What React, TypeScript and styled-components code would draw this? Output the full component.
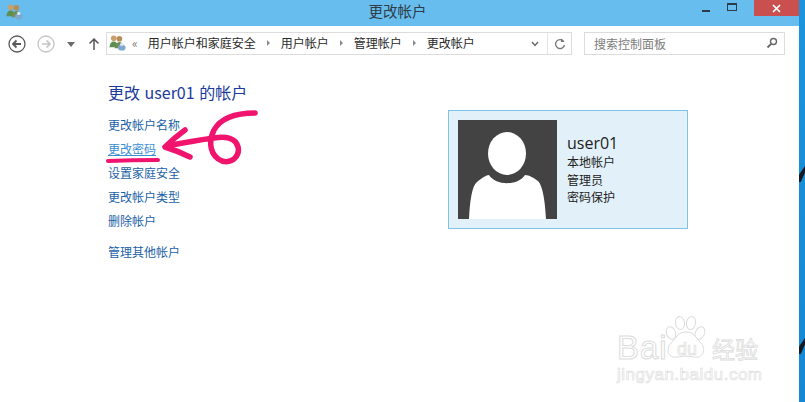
import React from 'react';
import styled, { createGlobalStyle } from 'styled-components';

const GlobalStyle = createGlobalStyle`
  html, body {
    margin: 0;
    padding: 0;
    background: #fff;
    overflow: hidden;
  }
  body {
    font-family: "Noto Sans CJK SC", "Open Sans", sans-serif;
  }
`;

const Desktop = styled.div`
  position: relative;
  width: 805px;
  height: 402px;
  display: flex;
  background: #fff;
  overflow: hidden;
`;

const Window = styled.div`
  width: 799px;
  height: 402px;
  display: flex;
  flex-direction: column;
  flex-shrink: 0;
`;

const Wallpaper = styled.div`
  position: relative;
  flex: 1;
  background: linear-gradient(180deg, #1b93dd 0%, #1488d4 100%);
`;

const WallpaperMark = styled.span<{ $top: number }>`
  position: absolute;
  left: 0;
  top: ${(p) => p.$top}px;
  width: 6px;
  height: 16px;
  background: #141a20;
  clip-path: polygon(100% 0, 100% 40%, 30% 100%, 0 100%, 0 55%);
`;

/* TITLE BAR */
const TitleBar = styled.div`
  height: 26px;
  flex-shrink: 0;
  background: #66bdee;
  display: grid;
  grid-template-columns: 1fr auto 1fr;
  align-items: center;
`;

const TitleIcon = styled.div`
  display: flex;
  padding: 0 0 4px 6px;
`;

const TitleText = styled.div`
  font-size: 14.5px;
  color: #2f3b45;
  padding: 0 4px 6px 0;
`;

const WindowButtons = styled.div`
  display: flex;
  justify-content: flex-end;
  align-self: start;
`;

const WindowButton = styled.div<{ $close?: boolean }>`
  width: ${(p) => (p.$close ? '45px' : '26px')};
  height: 16px;
  margin-left: ${(p) => (p.$close ? '9px' : '0')};
  background: ${(p) => (p.$close ? '#c9504f' : 'transparent')};
  display: flex;
  align-items: center;
  justify-content: center;
`;

/* ADDRESS ROW */
const NavRow = styled.div`
  height: 36px;
  flex-shrink: 0;
  display: flex;
  align-items: flex-start;
  padding-top: 6px;
  box-sizing: border-box;
`;

const NavButtons = styled.div`
  width: 106px;
  height: 24px;
  flex-shrink: 0;
  display: flex;
  align-items: center;
  padding-left: 8px;
  box-sizing: border-box;
`;

const NavGlyph = styled.svg<{ $gap: number }>`
  margin-left: ${(p) => p.$gap}px;
  flex-shrink: 0;
`;

const AddressBar = styled.div`
  width: 466px;
  height: 23px;
  flex-shrink: 0;
  border: 1px solid #dcdcdc;
  box-sizing: border-box;
  display: flex;
  align-items: center;
  font-size: 12px;
  color: #2a2a2a;
`;

const Crumbs = styled.div`
  flex: 1;
  display: flex;
  align-items: center;
  padding: 0 0 2px 2px;
  white-space: nowrap;
`;

const Chevrons = styled.span`
  font-size: 12px;
  color: #777;
  margin: 0 10px 0 6px;
`;

const Caret = styled.span`
  width: 0;
  height: 0;
  margin: 0 11px;
  border-left: 3px solid #8a8a8a;
  border-top: 3px solid transparent;
  border-bottom: 3px solid transparent;
`;

const BarAction = styled.div<{ $divider?: boolean }>`
  width: 24px;
  height: 21px;
  display: flex;
  align-items: center;
  justify-content: center;
  border-left: ${(p) => (p.$divider ? '1px solid #e4e4e4' : 'none')};
  box-sizing: border-box;
`;

const SearchBox = styled.div`
  width: 201px;
  height: 23px;
  margin-left: 12px;
  border: 1px solid #dcdcdc;
  box-sizing: border-box;
  display: flex;
  align-items: center;
  justify-content: space-between;
  padding: 0 6px 1px 9px;
  font-size: 12px;
  color: #7d7d7d;
`;

/* CONTENT */
const Content = styled.div`
  flex: 1;
  display: flex;
  padding-top: 19px;
`;

const LeftColumn = styled.div`
  width: 448px;
  padding-left: 108px;
  box-sizing: border-box;
  flex-shrink: 0;
`;

const Heading = styled.h2`
  margin: 0 0 10px;
  font-size: 16px;
  font-weight: 400;
  line-height: 22px;
  color: #1a3a9c;
  word-spacing: 1px;
`;

const LinkList = styled.div`
  display: flex;
  flex-direction: column;
`;

const ActionLink = styled.a<{ $active?: boolean; $spaced?: boolean }>`
  height: 24px;
  margin-top: ${(p) => (p.$spaced ? '7px' : '0')};
  font-size: 12px;
  line-height: 24px;
  color: ${(p) => (p.$active ? '#3b8fd6' : '#1c5fa8')};
  text-decoration: ${(p) => (p.$active ? 'underline' : 'none')};
`;

const AccountCard = styled.div`
  width: 240px;
  height: 119px;
  margin-top: 29px;
  padding: 9px;
  box-sizing: border-box;
  background: #e2f1f9;
  border: 1px solid #7fc3e3;
  display: flex;
  align-items: center;
  gap: 10px;
`;

const Avatar = styled.div`
  width: 99px;
  height: 99px;
  flex-shrink: 0;
  background: #434343;
`;

const AccountInfo = styled.div`
  display: flex;
  flex-direction: column;
  color: #222;
`;

const AccountName = styled.div`
  font-family: "Open Sans", "Noto Sans", sans-serif;
  font-size: 16px;
  line-height: 20px;
`;

const AccountLine = styled.div`
  font-size: 12px;
  line-height: 17.5px;
`;

/* OVERLAYS */
const Scribble = styled.svg`
  position: absolute;
  left: 0;
  top: 0;
  pointer-events: none;
`;

const Watermark = styled.div`
  position: absolute;
  left: 617px;
  top: 316px;
  width: 150px;
  height: 70px;
  color: #fff;
  font-family: "Liberation Sans", sans-serif;
`;

const MarkBrand = styled.span`
  position: absolute;
  left: 0;
  top: 14px;
  font-size: 33px;
  line-height: 36px;
  letter-spacing: 1px;
  -webkit-text-stroke: 1px #dcdcdc;
`;

const MarkPaw = styled.svg`
  position: absolute;
  left: 47px;
  top: 0;
`;

const MarkDu = styled.span`
  position: absolute;
  left: 60px;
  top: 24px;
  font-size: 18px;
  line-height: 18px;
  -webkit-text-stroke: 0.7px #dcdcdc;
`;

const MarkCn = styled.span`
  position: absolute;
  left: 95px;
  top: 19px;
  font-family: "Noto Sans CJK SC", sans-serif;
  font-size: 23px;
  line-height: 26px;
  white-space: nowrap;
  -webkit-text-stroke: 0.8px #dcdcdc;
`;

const MarkUrl = styled.span`
  position: absolute;
  left: 0;
  top: 49px;
  font-size: 17px;
  line-height: 20px;
  letter-spacing: 0.5px;
  white-space: nowrap;
  -webkit-text-stroke: 0.7px #e0e0e0;
`;

const UsersIcon: React.FC<{ size: number }> = ({ size }) => (
  <svg width={size} height={size} viewBox="0 0 18 18">
    <circle cx="5" cy="4.5" r="3" fill="#c9a06a" />
    <path d="M0.5 14 Q1 8 5 8 Q9 8 9.5 14 Z" fill="#5d8f4e" />
    <circle cx="11" cy="5" r="3" fill="#b98d58" />
    <path d="M6 15 Q7 8.5 11 8.5 Q14 8.5 15 12 L15 15 Z" fill="#6f8f5a" />
    <ellipse cx="13.5" cy="14.5" rx="4" ry="3" fill="#7fa8cf" />
    <circle cx="13.5" cy="11" r="1.8" fill="#dfe8ef" />
  </svg>
);

const BackIcon: React.FC<{ size: number }> = ({ size }) => (
  <svg width={size} height={size} viewBox="0 0 18 18">
    <circle cx="9" cy="9" r="8" fill="none" stroke="#5a5a5a" strokeWidth="1.3" />
    <path d="M13 9 H5 M8.5 5.5 L5 9 L8.5 12.5" fill="none" stroke="#5a5a5a" strokeWidth="1.8" />
  </svg>
);

const App: React.FC = () => {
  return (
    <Desktop>
      <GlobalStyle />
      <Window>
        <TitleBar>
          <TitleIcon>
            <UsersIcon size={17} />
          </TitleIcon>
          <TitleText>更改帐户</TitleText>
          <WindowButtons>
            <WindowButton>
              <svg width="9" height="9" viewBox="0 0 9 9">
                <rect x="0" y="6" width="8" height="2" fill="#2f3b45" />
              </svg>
            </WindowButton>
            <WindowButton>
              <svg width="11" height="10" viewBox="0 0 11 10">
                <rect x="0.5" y="0.5" width="9" height="7" fill="none" stroke="#2f3b45" strokeWidth="1" />
                <rect x="0.5" y="0.5" width="9" height="1.5" fill="#2f3b45" />
              </svg>
            </WindowButton>
            <WindowButton $close>
              <svg width="9" height="9" viewBox="0 0 9 9">
                <path d="M1 1 L8 8 M8 1 L1 8" stroke="#fff" strokeWidth="1.7" />
              </svg>
            </WindowButton>
          </WindowButtons>
        </TitleBar>

        <NavRow>
          <NavButtons>
            <BackIcon size={18} />
            <NavGlyph $gap={11} width="18" height="18" viewBox="0 0 18 18">
              <circle cx="9" cy="9" r="8" fill="none" stroke="#c4c4c4" strokeWidth="1.3" />
              <path d="M5 9 H13 M9.5 5.5 L13 9 L9.5 12.5" fill="none" stroke="#c4c4c4" strokeWidth="1.6" />
            </NavGlyph>
            <NavGlyph $gap={12} width="8" height="5" viewBox="0 0 8 5">
              <path d="M0 0 H8 L4 5 Z" fill="#6a6a6a" />
            </NavGlyph>
            <NavGlyph $gap={13} width="12" height="14" viewBox="0 0 12 14">
              <path d="M6 13 V2 M1.5 6.5 L6 2 L10.5 6.5" fill="none" stroke="#555" strokeWidth="1.5" />
            </NavGlyph>
          </NavButtons>
          <AddressBar>
            <Crumbs>
              <UsersIcon size={17} />
              <Chevrons>«</Chevrons>
              用户帐户和家庭安全
              <Caret />
              用户帐户
              <Caret />
              管理帐户
              <Caret />
              更改帐户
            </Crumbs>
            <BarAction>
              <svg width="8" height="6" viewBox="0 0 8 6">
                <path d="M1 1 L4 4.5 L7 1" fill="none" stroke="#666" strokeWidth="1.4" />
              </svg>
            </BarAction>
            <BarAction $divider>
              <svg width="12" height="12" viewBox="0 0 12 12">
                <path d="M9.8 3.5 A4.5 4.5 0 1 0 10.5 7" fill="none" stroke="#777" strokeWidth="1.3" />
                <path d="M7 0.5 L7 4 L10.5 4 Z" fill="#777" />
              </svg>
            </BarAction>
          </AddressBar>
          <SearchBox>
            搜索控制面板
            <svg width="12" height="12" viewBox="0 0 12 12">
              <circle cx="7.5" cy="4.5" r="3" fill="none" stroke="#666" strokeWidth="1.4" />
              <path d="M5.2 6.8 L1.5 10.5" stroke="#666" strokeWidth="1.8" />
            </svg>
          </SearchBox>
        </NavRow>

        <Content>
          <LeftColumn>
            <Heading>更改 user01 的帐户</Heading>
            <LinkList>
              <ActionLink>更改帐户名称</ActionLink>
              <ActionLink $active>更改密码</ActionLink>
              <ActionLink>设置家庭安全</ActionLink>
              <ActionLink>更改帐户类型</ActionLink>
              <ActionLink>删除帐户</ActionLink>
              <ActionLink $spaced>管理其他帐户</ActionLink>
            </LinkList>
          </LeftColumn>
          <AccountCard>
            <Avatar>
              <svg width="99" height="99" viewBox="0 0 99 99">
                <ellipse cx="49" cy="33.5" rx="19" ry="21.5" fill="#fff" />
                <path d="M11 99 C12 80 14 66 19 62 C24 58 28 55 31 55 C38 66 60 66 67 55 C71 55 76 58 80 61 C85 66 87 82 88 99 Z" fill="#fff" />
              </svg>
            </Avatar>
            <AccountInfo>
              <AccountName>user01</AccountName>
              <AccountLine>本地帐户</AccountLine>
              <AccountLine>管理员</AccountLine>
              <AccountLine>密码保护</AccountLine>
            </AccountInfo>
          </AccountCard>
        </Content>
      </Window>
      <Wallpaper>
        <WallpaperMark $top={166} />
        <WallpaperMark $top={338} />
      </Wallpaper>

      <Scribble width="805" height="402" viewBox="0 0 805 402">
        <g fill="none" stroke="#f0146e" strokeLinecap="round" strokeLinejoin="round">
          <path d="M108 161 Q132 160 158 160" strokeWidth="4" />
          <path d="M185 130 Q174 138 165 147 Q178 151 190 157" strokeWidth="5.5" />
          <path d="M255 113 C238 113 222 116 214 130 C208 142 210 156 222 161 C233 164 240 155 238 147 C236 138 226 136 214 138 C198 140 182 143 167 146" strokeWidth="5.5" />
        </g>
      </Scribble>

      <Watermark>
        <MarkPaw width="46" height="44" viewBox="0 0 46 44" fill="#fff" stroke="#dcdcdc" strokeWidth="1">
          <ellipse cx="7" cy="17" rx="4.5" ry="6.5" transform="rotate(-20 7 17)" />
          <ellipse cx="16" cy="7" rx="4.5" ry="6.5" transform="rotate(-8 16 7)" />
          <ellipse cx="27" cy="7" rx="4.5" ry="6.5" transform="rotate(10 27 7)" />
          <ellipse cx="36" cy="17" rx="4.5" ry="6.5" transform="rotate(24 36 17)" />
          <path d="M22 16 C30 16 32 22 37 27 C43 34 38 43 30 41 C25 40 18 40 13 41 C5 43 1 34 7 27 C12 22 14 16 22 16 Z" />
        </MarkPaw>
        <MarkBrand>Bai</MarkBrand>
        <MarkDu>du</MarkDu>
        <MarkCn>经验</MarkCn>
        <MarkUrl>jingyan.baidu.com</MarkUrl>
      </Watermark>
    </Desktop>
  );
};

export default App;
